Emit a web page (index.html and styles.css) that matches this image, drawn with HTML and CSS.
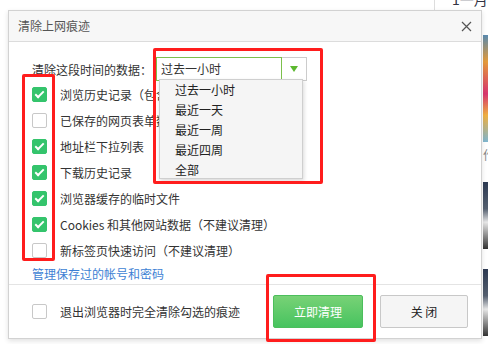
FILE: index.html
```html
<!DOCTYPE html>
<html lang="zh-CN">
<head>
    <meta charset="UTF-8">
    <title>清除上网痕迹</title>
    <link rel="stylesheet" href="styles.css">
</head>
<body>

    <!-- page behind the dialog -->
    <div class="page">
        <div class="page-top">
            <span class="page-date">1一月号</span>
        </div>
        <div class="page-side">
            <div class="thumb thumb-color"></div>
            <div class="thumb-text">作</div>
            <div class="thumb thumb-dark"></div>
            <div class="thumb thumb-dark"></div>
        </div>
    </div>

    <!-- Dialog -->
    <div class="dialog">
        <div class="dialog-head">
            <span class="dialog-title">清除上网痕迹</span>
            <svg class="close" width="11" height="11" viewBox="0 0 11 11">
                <path d="M1 1 L10 10 M10 1 L1 10" stroke="#555" stroke-width="1.2" fill="none"/>
            </svg>
        </div>

        <div class="dialog-body">
            <div class="range-row">
                <span>清除这段时间的数据：</span>
                <div class="select">
                    <div class="select-value">过去一小时</div>
                    <div class="select-arrow">
                        <svg width="8" height="6" viewBox="0 0 8 6"><path d="M0 0 H8 L4 6 Z" fill="#5cb82f"/></svg>
                    </div>
                    <ul class="select-menu">
                        <li>过去一小时</li>
                        <li>最近一天</li>
                        <li>最近一周</li>
                        <li>最近四周</li>
                        <li>全部</li>
                    </ul>
                </div>
            </div>

            <ul class="check-list">
                <li><span class="box checked"></span>浏览历史记录（包含搜索记录）</li>
                <li><span class="box"></span>已保存的网页表单数据</li>
                <li><span class="box checked"></span>地址栏下拉列表</li>
                <li><span class="box checked"></span>下载历史记录</li>
                <li><span class="box checked"></span>浏览器缓存的临时文件</li>
                <li><span class="box checked"></span>Cookies 和其他网站数据（不建议清理）</li>
                <li><span class="box"></span>新标签页快速访问（不建议清理）</li>
            </ul>

            <a class="manage-link" href="#">管理保存过的帐号和密码</a>
        </div>

        <div class="dialog-foot">
            <label class="exit-option"><span class="box"></span>退出浏览器时完全清除勾选的痕迹</label>
            <div class="buttons">
                <button class="btn btn-green">立即清理</button>
                <button class="btn btn-gray">关 闭</button>
            </div>
        </div>
    </div>

    <!-- red annotation boxes -->
    <div class="mark mark-select"></div>
    <div class="mark mark-checks"></div>
    <div class="mark mark-button"></div>

</body>
</html>
```

FILE: styles.css
```css
body {
    margin: 0;
    width: 488px;
    height: 344px;
    overflow: hidden;
    position: relative;
    background-color: #fff;
    font-family: "Noto Sans CJK SC", sans-serif;
    font-size: 12px;
    color: #333;
}

ul {
    list-style: none;
    margin: 0;
    padding: 0;
}

/* Page behind */
.page {
    height: 344px;
    position: relative;
}

.page-top {
    height: 10px;
    margin-left: 434px;
    border-left: 1px solid #ddd;
    position: relative;
}

.page-date {
    position: absolute;
    left: 17px;
    top: -9px;
    font-size: 14px;
    line-height: 16px;
    color: #334;
}

.page-side {
    position: absolute;
    left: 483px;
    top: 35px;
    width: 5px;
}

.thumb {
    width: 5px;
}

.thumb-color {
    height: 107px;
    background: linear-gradient(180deg, #5a8bb0 0%, #e59b3a 25%, #d8346e 55%, #f0b040 75%, #7fb6d0 100%);
}

.thumb-text {
    height: 40px;
    font-size: 12px;
    line-height: 26px;
    color: #888;
}

.thumb-dark {
    height: 67px;
    margin-bottom: 20px;
    background: linear-gradient(180deg, #2d3a52 0%, #556070 40%, #e8e8e8 60%, #333 100%);
}

/* Dialog */
.dialog {
    position: absolute;
    left: 8px;
    top: 10px;
    width: 472px;
    height: 327px;
    border: 1px solid #d2d2d2;
    background-color: #fff;
    box-shadow: 0 2px 5px rgba(0, 0, 0, 0.12);
    display: flex;
    flex-direction: column;
}

.dialog-head {
    height: 30px;
    flex-shrink: 0;
    background-color: #f7f7f7;
    border-bottom: 1px solid #dcdcdc;
    padding: 0 9px 0 9px;
    display: flex;
    align-items: center;
    justify-content: space-between;
}

.dialog-title {
    color: #555;
    line-height: 16px;
}

.dialog-body {
    padding: 15px 0 0 23px;
    flex: 1;
}

.range-row {
    height: 24px;
    display: flex;
    align-items: center;
    gap: 4px;
}

.select {
    position: relative;
    display: flex;
    height: 24px;
}

.select-value {
    width: 120px;
    padding-left: 4px;
    border: 1px solid #7cc04c;
    line-height: 22px;
}

.select-arrow {
    width: 24px;
    border: 1px solid #ccc;
    border-left: none;
    display: flex;
    align-items: center;
    justify-content: center;
}

.select-menu {
    position: absolute;
    left: 3px;
    top: 22px;
    width: 142px;
    height: 98px;
    overflow: hidden;
    background-color: #f5f5f5;
    border: 1px solid #cfcfcf;
    box-shadow: 1px 2px 4px rgba(0, 0, 0, 0.15);
    z-index: 2;
}

.select-menu li {
    height: 20px;
    line-height: 20px;
    padding-left: 15px;
    color: #222;
}

.check-list li {
    height: 26px;
    display: flex;
    align-items: center;
    gap: 13px;
    white-space: nowrap;
}

.box {
    width: 13px;
    height: 13px;
    border: 1px solid #c8c8c8;
    border-radius: 2px;
    background-color: #fff;
    flex-shrink: 0;
    position: relative;
}

.box.checked {
    background-color: #34c46c;
    border-color: #34c46c;
}

.box.checked::after {
    content: "";
    position: absolute;
    left: 4px;
    top: 1px;
    width: 3px;
    height: 7px;
    border: solid #fff;
    border-width: 0 2px 2px 0;
    transform: rotate(45deg);
}

.manage-link {
    display: block;
    margin-top: 1px;
    line-height: 20px;
    color: #3d7fd4;
    text-decoration: none;
}

.dialog-foot {
    height: 48px;
    flex-shrink: 0;
    border-top: 1px solid #e4e4e4;
    padding: 10px 13px 0 23px;
    display: flex;
    align-items: flex-start;
    justify-content: space-between;
}

.exit-option {
    height: 33px;
    display: flex;
    align-items: center;
    gap: 13px;
}

.buttons {
    display: flex;
    gap: 17px;
}

.btn {
    height: 33px;
    border-radius: 2px;
    font-family: "Noto Sans CJK SC", sans-serif;
    font-size: 12px;
    padding: 0;
}

.btn-green {
    width: 90px;
    color: #fff;
    border: 1px solid #4cbe5c;
    background: linear-gradient(180deg, #78d276 0%, #47c35f 100%);
}

.btn-gray {
    width: 88px;
    color: #222;
    border: 1px solid #c8c8c8;
    background-color: #f5f5f5;
}

/* Red annotation boxes */
.mark {
    position: absolute;
    border: 3px solid #ff1d1d;
    border-radius: 2px;
    z-index: 5;
}

.mark-select {
    left: 153px;
    top: 48px;
    width: 164px;
    height: 130px;
}

.mark-checks {
    left: 22px;
    top: 74px;
    width: 27px;
    height: 181px;
}

.mark-button {
    left: 266px;
    top: 274px;
    width: 104px;
    height: 62px;
}
```
